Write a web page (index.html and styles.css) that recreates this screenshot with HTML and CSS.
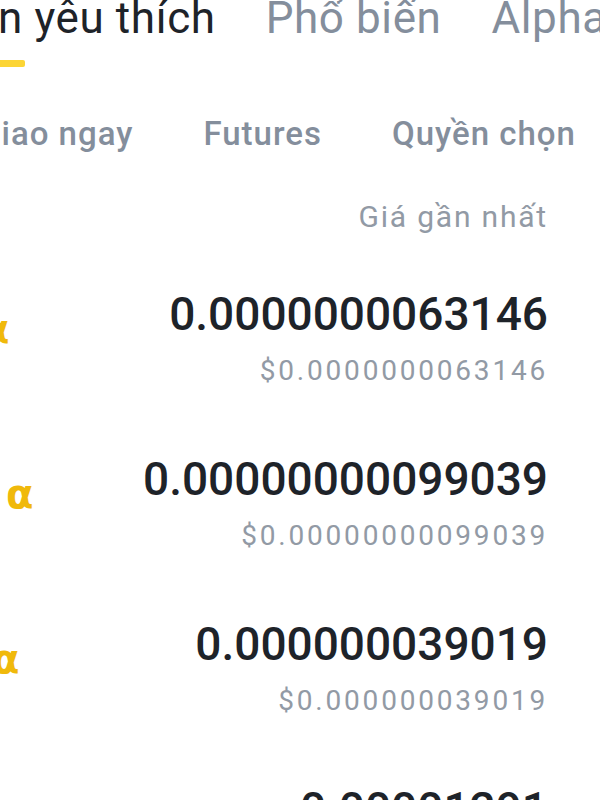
FILE: index.html
```html
<!DOCTYPE html>
<html lang="vi">
<head>
    <meta charset="UTF-8">
    <meta name="viewport" content="width=device-width, initial-scale=1.0">
    <title>Thị trường</title>
    <link rel="stylesheet" href="styles.css">
</head>
<body>
    <div class="screen">
        <!-- Tabs chính -->
        <nav class="tabs">
            <span class="tab active">n yêu thích</span>
            <span class="tab">Phổ biến</span>
            <span class="tab">Alpha</span>
        </nav>
        <div class="indicator"></div>

        <!-- Tabs phụ -->
        <nav class="subtabs">
            <span class="subtab">Giao ngay</span>
            <span class="subtab">Futures</span>
            <span class="subtab">Quyền chọn</span>
        </nav>

        <div class="list-head">Giá gần nhất</div>

        <div class="list">
            <div class="row">
                <span class="alpha shift-1">α</span>
                <div class="price">
                    <div class="last">0.0000000063146</div>
                    <div class="usd">$0.0000000063146</div>
                </div>
            </div>
            <div class="row">
                <span class="alpha shift-2">α</span>
                <div class="price">
                    <div class="last">0.00000000099039</div>
                    <div class="usd">$0.00000000099039</div>
                </div>
            </div>
            <div class="row">
                <span class="alpha shift-3">α</span>
                <div class="price">
                    <div class="last">0.000000039019</div>
                    <div class="usd">$0.000000039019</div>
                </div>
            </div>
            <div class="row">
                <span class="alpha shift-2"></span>
                <div class="price">
                    <div class="last">0.00001291</div>
                    <div class="usd">$0.00001291</div>
                </div>
            </div>
        </div>
    </div>
</body>
</html>
```

FILE: styles.css
```css
body {
    margin: 0;
    padding: 0;
    background-color: #ffffff;
    font-family: 'Roboto', 'Noto Sans', sans-serif;
    color: #1e2329;
}

.screen {
    width: 600px;
    height: 800px;
    overflow: hidden;
}

.tabs {
    display: flex;
    gap: 50px;
    margin-top: -4px;
    margin-left: -2px;
    font-size: 44px;
    line-height: 44px;
    letter-spacing: 0.6px;
    white-space: nowrap;
    color: #848e9c;
}

.tab.active {
    color: #1e2329;
}

.indicator {
    width: 56px;
    height: 7px;
    margin-top: 20px;
    margin-left: -31px;
    background: #fcd535;
    border-radius: 2px;
}

.subtabs {
    display: flex;
    gap: 70px;
    margin-top: 50px;
    margin-left: -22px;
    font-size: 33px;
    line-height: 33px;
    font-weight: 500;
    letter-spacing: 1px;
    white-space: nowrap;
    color: #848e9c;
}

.list-head {
    margin-top: 52px;
    padding-right: 52px;
    text-align: right;
    font-size: 30px;
    line-height: 30px;
    letter-spacing: 1.8px;
    color: #929aa5;
}

.list {
    margin-top: 24px;
}

.row {
    display: flex;
    justify-content: space-between;
    align-items: center;
    height: 165px;
    padding-right: 52px;
}

.alpha {
    font-family: 'DejaVu Sans', sans-serif;
    font-weight: bold;
    font-size: 40px;
    color: #f0b90b;
    margin-top: -20px;
}

.shift-1 { margin-left: -18px; }
.shift-2 { margin-left: 6px; }
.shift-3 { margin-left: -8px; }

.price {
    text-align: right;
}

.last {
    font-size: 46px;
    line-height: 46px;
    font-weight: 500;
    color: #1e2329;
}

.usd {
    margin-top: 19px;
    font-size: 28px;
    line-height: 30px;
    letter-spacing: 2.8px;
    color: #929aa5;
}
```
